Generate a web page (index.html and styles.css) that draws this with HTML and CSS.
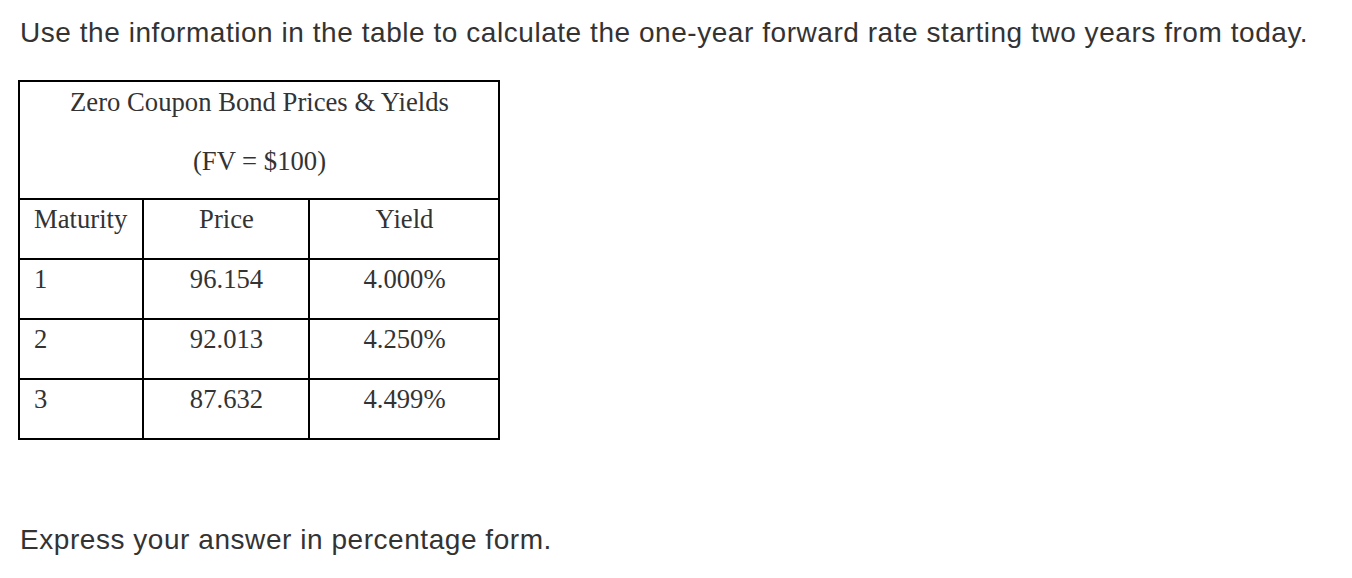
FILE: index.html
```html
<!DOCTYPE html>
<html>
<head>
<meta charset="utf-8">
<link rel="stylesheet" href="styles.css">
</head>
<body>
<div class="page">
  <p class="prompt">Use the information in the table to calculate the one-year forward rate starting two years from today.</p>
  <div class="bond-table">
    <div class="cell head">
      <div class="head-line">Zero Coupon Bond Prices &amp; Yields</div>
      <div class="head-line">(FV = $100)</div>
    </div>
    <div class="cell">Maturity</div>
    <div class="cell center">Price</div>
    <div class="cell center">Yield</div>
    <div class="cell">1</div>
    <div class="cell center">96.154</div>
    <div class="cell center">4.000%</div>
    <div class="cell">2</div>
    <div class="cell center">92.013</div>
    <div class="cell center">4.250%</div>
    <div class="cell">3</div>
    <div class="cell center">87.632</div>
    <div class="cell center">4.499%</div>
  </div>
  <p class="prompt answer">Express your answer in percentage form.</p>
</div>
</body>
</html>
```
FILE: styles.css
```css
html, body {
  margin: 0;
  padding: 0;
  background: #ffffff;
}

.page {
  padding: 17px 18px 0 18px;
}

.prompt {
  margin: 0 0 0 2px;
  font-family: "Liberation Sans", Arial, sans-serif;
  font-size: 28px;
  letter-spacing: 0.55px;
  line-height: 32px;
  color: #333333;
}

.bond-table {
  margin-top: 31px;
  display: grid;
  grid-template-columns: 122px 164px 188px;
  grid-template-rows: 116px 58px 58px 58px 58px;
  gap: 2px;
  padding: 2px;
  width: max-content;
  background: #000000;
  font-family: "Liberation Serif", "Times New Roman", serif;
  font-size: 26.67px;
  line-height: 31px;
  color: #333333;
}

.cell {
  background: #ffffff;
  padding: 4px 13px 0 14px;
}

.cell.center {
  text-align: center;
}

.cell.head {
  grid-column: 1 / 4;
  text-align: center;
  padding-top: 5px;
}

.head-line + .head-line {
  margin-top: 28px;
}

.answer {
  margin-top: 84px;
}
```
